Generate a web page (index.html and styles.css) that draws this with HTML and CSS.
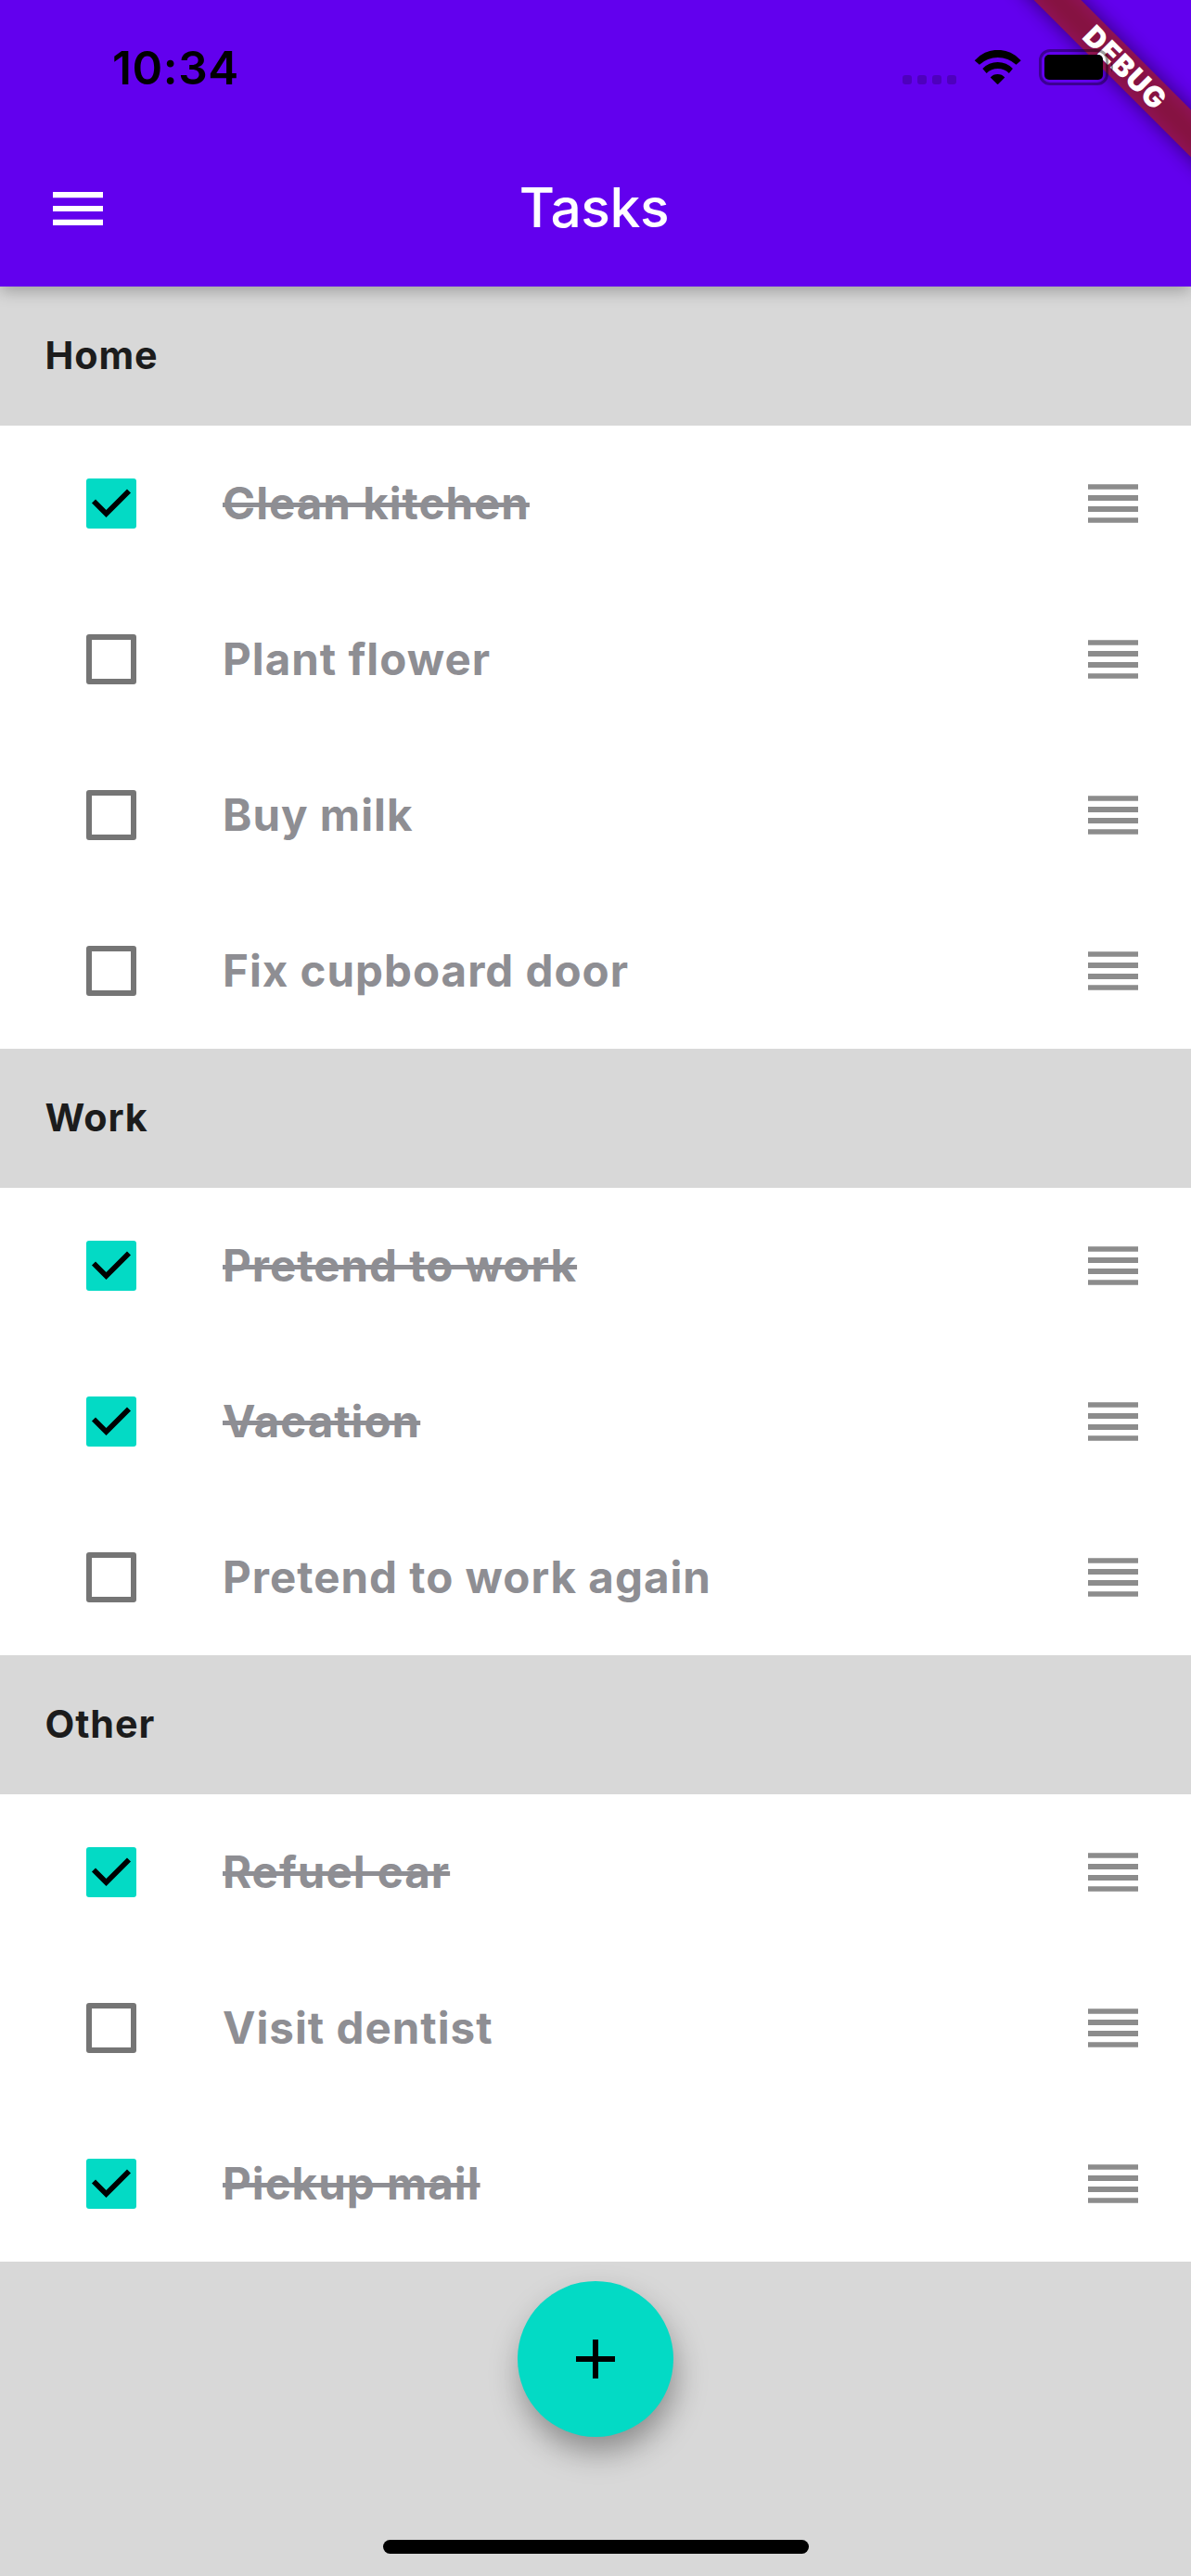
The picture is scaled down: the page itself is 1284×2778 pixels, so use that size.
FILE: index.html
```
<!DOCTYPE html>
<html lang="en">
<head>
<meta charset="utf-8">
<title>Tasks</title>
<link rel="stylesheet" href="styles.css">
</head>
<body>
<svg class="defs" width="0" height="0" aria-hidden="true">
  <symbol id="handle" viewBox="0 0 54 42">
    <path d="M0 .15h54v5.7H0zM0 12h54v6H0zM0 24h54v6H0zM0 36.15h54v5.7H0z"/>
  </symbol>
  <symbol id="check" viewBox="0 0 54 54">
    <path d="M8 24.5 21.5 38 46 13.5" fill="none" stroke="#000" stroke-width="5.700"/>
  </symbol>
</svg>

<header class="app-bar">
  <div class="status">
    <span class="time">10:34</span>
    <div class="status-icons">
      <svg class="signal" width="58" height="10" viewBox="0 0 58 10"><rect width="10" height="10" rx="3"/><rect x="16" width="10" height="10" rx="3"/><rect x="32" width="10" height="10" rx="3"/><rect x="48" width="10" height="10" rx="3"/></svg>
      <svg class="wifi" width="52" height="38" viewBox="0 0 52 38"><path d="M.7 11.3A33 33 0 0 1 50.7 11.3L45.5 15.8A29 29 0 0 0 5.9 15.8ZM9.3 20A22.3 22.3 0 0 1 41.9 20L37.8 25A16.9 16.9 0 0 0 13.6 25ZM17.7 29.5A10.5 10.5 0 0 1 33.3 29.5L26.4 36.6Q25.6 37.2 24.8 36.6Z"/></svg>
      <svg class="battery" width="82" height="39" viewBox="0 0 82 39"><rect x="1.5" y="1.5" width="72" height="36" rx="10.5" fill="none" stroke="#000" stroke-width="3" opacity=".38"/><rect x="6" y="6" width="63" height="27" rx="5"/><path d="M78 14q4 5.500 0 11z" opacity=".38"/></svg>
    </div>
  </div>
  <div class="toolbar">
    <svg class="menu" width="54" height="36" viewBox="0 0 54 36"><path d="M0 0h54v6.300H0zM0 15h54v6H0zM0 29.700h54V36H0z"/></svg>
    <h1 class="title">Tasks</h1>
  </div>
  <div class="debug"><div class="ribbon-shadow"></div><div class="ribbon">DEBUG</div></div>
</header>

<main>
  <section>
    <h2 class="group">Home</h2>
    <ul class="tasks">
      <li class="task done"><span class="box"><svg><use href="#check"/></svg></span><span class="name">Clean kitchen</span><svg class="handle"><use href="#handle"/></svg></li>
      <li class="task"><span class="box"></span><span class="name">Plant flower</span><svg class="handle"><use href="#handle"/></svg></li>
      <li class="task"><span class="box"></span><span class="name">Buy milk</span><svg class="handle"><use href="#handle"/></svg></li>
      <li class="task"><span class="box"></span><span class="name">Fix cupboard door</span><svg class="handle"><use href="#handle"/></svg></li>
    </ul>
  </section>
  <section>
    <h2 class="group">Work</h2>
    <ul class="tasks">
      <li class="task done"><span class="box"><svg><use href="#check"/></svg></span><span class="name">Pretend to work</span><svg class="handle"><use href="#handle"/></svg></li>
      <li class="task done"><span class="box"><svg><use href="#check"/></svg></span><span class="name">Vacation</span><svg class="handle"><use href="#handle"/></svg></li>
      <li class="task"><span class="box"></span><span class="name">Pretend to work again</span><svg class="handle"><use href="#handle"/></svg></li>
    </ul>
  </section>
  <section>
    <h2 class="group">Other</h2>
    <ul class="tasks">
      <li class="task done"><span class="box"><svg><use href="#check"/></svg></span><span class="name">Refuel car</span><svg class="handle"><use href="#handle"/></svg></li>
      <li class="task"><span class="box"></span><span class="name">Visit dentist</span><svg class="handle"><use href="#handle"/></svg></li>
      <li class="task done"><span class="box"><svg><use href="#check"/></svg></span><span class="name">Pickup mail</span><svg class="handle"><use href="#handle"/></svg></li>
    </ul>
  </section>
</main>

<footer class="bottom">
  <button class="fab" aria-label="Add task"><svg width="42" height="42" viewBox="0 0 42 42"><path d="M18 0h6v18h18v6H24v18h-6V24H0v-6h18z"/></svg></button>
  <div class="home-indicator"></div>
</footer>
</body>
</html>
```
FILE: styles.css
```
* { box-sizing: border-box; }

body {
  margin: 0;
  width: 1284px;
  height: 2778px;
  overflow: hidden;
  background: #d8d8d8;
  font-family: Inter, "Liberation Sans", sans-serif;
}

h1, h2, ul { margin: 0; padding: 0; }
svg { display: block; }
.defs { position: absolute; }

.app-bar {
  position: relative;
  z-index: 1;
  height: 309px;
  background: #6200ee;
  box-shadow: 0 4px 17px rgba(0, 0, 0, .29);
}

.status {
  position: relative;
  z-index: 2;
  height: 141px;
  padding: 43px 82px 0 121px;
  display: flex;
  justify-content: space-between;
}
.time {
  font-size: 49.5px;
  font-weight: 600;
  line-height: 60px;
  letter-spacing: .6px;
}
.status-icons {
  display: flex;
  align-items: flex-start;
  padding-top: 10px;
}
.signal { margin: 28px 19px 0 0; opacity: .2; }
.wifi { margin: 1px 18px 0 0; }

.toolbar {
  height: 168px;
  display: grid;
  grid-template-columns: 1fr auto 1fr;
  align-items: center;
}
.menu { margin-left: 57px; fill: #fff; }
.title {
  padding: 0 3px 3px 0;
  color: #fff;
  font-size: 58.7px;
  font-weight: 500;
  letter-spacing: -.4px;
}

/* Corner ribbon, above the bar but below the status icons */
.debug {
  position: absolute;
  top: 0;
  right: 0;
  width: 240px;
  height: 240px;
  overflow: hidden;
}
.ribbon, .ribbon-shadow {
  position: absolute;
  left: 18px;
  top: 54px;
  width: 300px;
  height: 36px;
  transform: rotate(45deg);
}
.ribbon-shadow { background: rgba(0, 0, 0, .5); filter: blur(10.9px); }
.ribbon {
  background: rgba(183, 28, 28, .627);
  color: #fff;
  font-size: 31px;
  font-weight: 900;
  line-height: 36px;
  letter-spacing: .9px;
  text-align: center;
  text-indent: 3px;
}

.group {
  height: 150px;
  padding: 0 48.5px 3px;
  display: flex;
  align-items: center;
  color: #1c1c1c;
  font-size: 41.3px;
  font-weight: 700;
  letter-spacing: .9px;
}

.tasks { background: #fff; list-style: none; }
.task {
  height: 168px;
  padding: 0 57px 0 93px;
  display: flex;
  align-items: center;
}
.box {
  width: 54px;
  height: 54px;
  margin-right: 93px;
  border: 6px solid #757575;
  border-radius: 3px;
}
.done .box { border: 0; background: #03dac5; }
.box svg { width: 54px; height: 54px; }
.name {
  padding-bottom: 2px;
  color: #8e8e93;
  font-size: 47.5px;
  font-weight: 700;
  letter-spacing: 1px;
}
.done .name { text-decoration: line-through; text-decoration-thickness: 4.6px; }
.handle { width: 54px; height: 42px; margin-left: auto; fill: #8c8c8c; }

.bottom {
  height: 339px;
  padding-top: 21px;
  display: flex;
  flex-direction: column;
  align-items: center;
}
.fab {
  width: 168px;
  height: 168px;
  padding: 0;
  display: grid;
  place-items: center;
  border: 0;
  border-radius: 50%;
  background: #03dac5;
  box-shadow: 3px 17px 34px -2px rgba(0, 0, 0, .37);
}
.home-indicator {
  width: 459px;
  height: 15px;
  margin: 111px 0 0 1px;
  border-radius: 8px;
  background: #000;
}
```
